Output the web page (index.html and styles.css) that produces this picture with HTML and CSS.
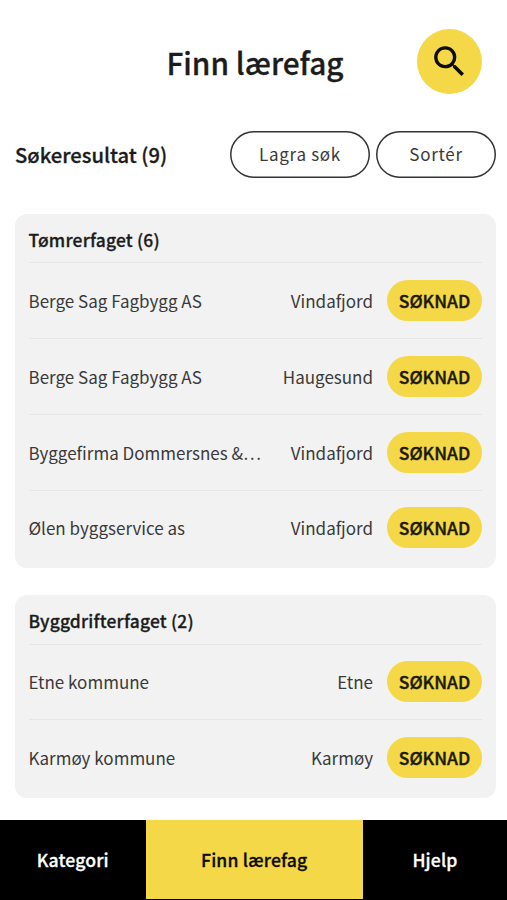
FILE: index.html
```html
<!DOCTYPE html>
<html lang="nn">
<head>
    <meta charset="UTF-8">
    <meta name="viewport" content="width=device-width, initial-scale=1.0">
    <title>Finn lærefag</title>
    <link rel="stylesheet" href="styles.css">
</head>
<body>
    <header class="header">
        <h1>Finn lærefag</h1>
        <button type="button" class="search-button" aria-label="Søk">
            <svg viewBox="0 0 24 24" width="41" height="41">
                <path d="M15.5 14h-.79l-.28-.27A6.471 6.471 0 0 0 16 9.5 6.5 6.5 0 1 0 9.5 16c1.61 0 3.09-.59 4.23-1.57l.27.28v.79l5 4.99L20.49 19l-4.99-5zm-6 0C7.01 14 5 11.99 5 9.5S7.01 5 9.5 5 14 7.01 14 9.5 11.99 14 9.5 14z"/>
            </svg>
        </button>
    </header>

    <div class="toolbar">
        <h2>Søkeresultat (9)</h2>
        <button type="button" class="outline-button save">Lagra søk</button>
        <button type="button" class="outline-button sort">Sortér</button>
    </div>

    <main class="results">
        <section class="card">
            <h3>Tømrerfaget (6)</h3>
            <div class="row">
                <span class="company">Berge Sag Fagbygg AS</span>
                <span class="place">Vindafjord</span>
                <button type="button" class="apply">SØKNAD</button>
            </div>
            <div class="row">
                <span class="company">Berge Sag Fagbygg AS</span>
                <span class="place">Haugesund</span>
                <button type="button" class="apply">SØKNAD</button>
            </div>
            <div class="row">
                <span class="company">Byggefirma Dommersnes &amp;…</span>
                <span class="place">Vindafjord</span>
                <button type="button" class="apply">SØKNAD</button>
            </div>
            <div class="row">
                <span class="company">Ølen byggservice as</span>
                <span class="place">Vindafjord</span>
                <button type="button" class="apply">SØKNAD</button>
            </div>
        </section>

        <section class="card">
            <h3>Byggdrifterfaget (2)</h3>
            <div class="row">
                <span class="company">Etne kommune</span>
                <span class="place">Etne</span>
                <button type="button" class="apply">SØKNAD</button>
            </div>
            <div class="row">
                <span class="company">Karmøy kommune</span>
                <span class="place">Karmøy</span>
                <button type="button" class="apply">SØKNAD</button>
            </div>
        </section>
    </main>

    <nav class="tabs">
        <a class="tab">Kategori</a>
        <a class="tab active">Finn lærefag</a>
        <a class="tab">Hjelp</a>
    </nav>
</body>
</html>
```
FILE: styles.css
```css
* {
    box-sizing: border-box;
}
body {
    display: flex;
    flex-direction: column;
    height: 900px;
    margin: 0;
    overflow: hidden;
    background-color: #fff;
    color: #1c1c1c;
    font-family: "Noto Sans CJK SC", "Noto Sans", sans-serif;
}
h1, h2, h3 {
    margin: 0;
    font-weight: 500;
    white-space: nowrap;
    -webkit-text-stroke: 0.3px currentColor; /* slightly heavier than medium */
}
button {
    padding: 0;
    border: none;
    color: inherit;
    font-family: inherit;
    cursor: pointer;
}
.header {
    display: grid;
    grid-template-columns: 65px 1fr 65px;
    align-items: center;
    height: 65px;
    margin: 29px 25px 0 28px;
}
.header h1 {
    grid-column: 2;
    font-size: 29.8px;
    line-height: 40px;
    text-align: center;
}
.search-button {
    display: flex;
    align-items: center;
    justify-content: center;
    width: 65px;
    height: 65px;
    border-radius: 50%;
    background-color: #f5d848;
}
.search-button svg {
    fill: #0c0c00;
}
.toolbar {
    display: flex;
    align-items: center;
    height: 47px;
    margin: 37px 11px 0 15px;
}
.toolbar h2 {
    flex: 1;
    font-size: 20.2px;
    line-height: 30px;
}
.outline-button {
    height: 47px;
    padding-bottom: 2px;
    border-radius: 24px;
    background-color: #fff;
    box-shadow: inset 0 0 0 1.5px #333;
    color: #3a3a3a;
    font-size: 17px;
    letter-spacing: 0.7px;
}
.save {
    width: 140px;
    margin-right: 6px;
}
.sort {
    width: 120px;
}
.results {
    display: flex;
    flex-direction: column;
    gap: 27px;
    padding: 36px 11px 0 15px;
}
.card {
    padding: 0 14px 3px 13.5px;
    border-radius: 12px;
    background-color: #f2f2f2;
}
.card h3 {
    height: 48.2px;
    font-size: 17.4px;
    letter-spacing: 0.2px;
    line-height: 51px;
}
.row {
    display: flex;
    align-items: center;
    height: 75.8px;
    border-top: 1px solid #e6e6e6;
    color: #3a3a3a;
    font-size: 17px;
}
.company {
    flex: 1;
    white-space: nowrap;
}
.place {
    margin-right: 14px;
}
.apply {
    width: 95px;
    height: 41px;
    border-radius: 21px;
    background-color: #f5d848;
    color: #1c1a05;
    font-size: 17.5px;
    font-weight: 500;
    -webkit-text-stroke: 0.4px currentColor;
}
.tabs {
    display: grid;
    grid-template-columns: 145.5px 217.5px 1fr;
    height: 80.5px;
    margin-top: auto;
    border-bottom: 1px solid #000;
    background-color: #000;
}
.tab {
    display: flex;
    align-items: center;
    justify-content: center;
    color: #fff;
    font-size: 17.6px;
    font-weight: 500;
    letter-spacing: 0.15px;
    -webkit-text-stroke: 0.3px currentColor;
}
.tab.active {
    background-color: #f5d848;
    color: #0c0c00;
}
```
